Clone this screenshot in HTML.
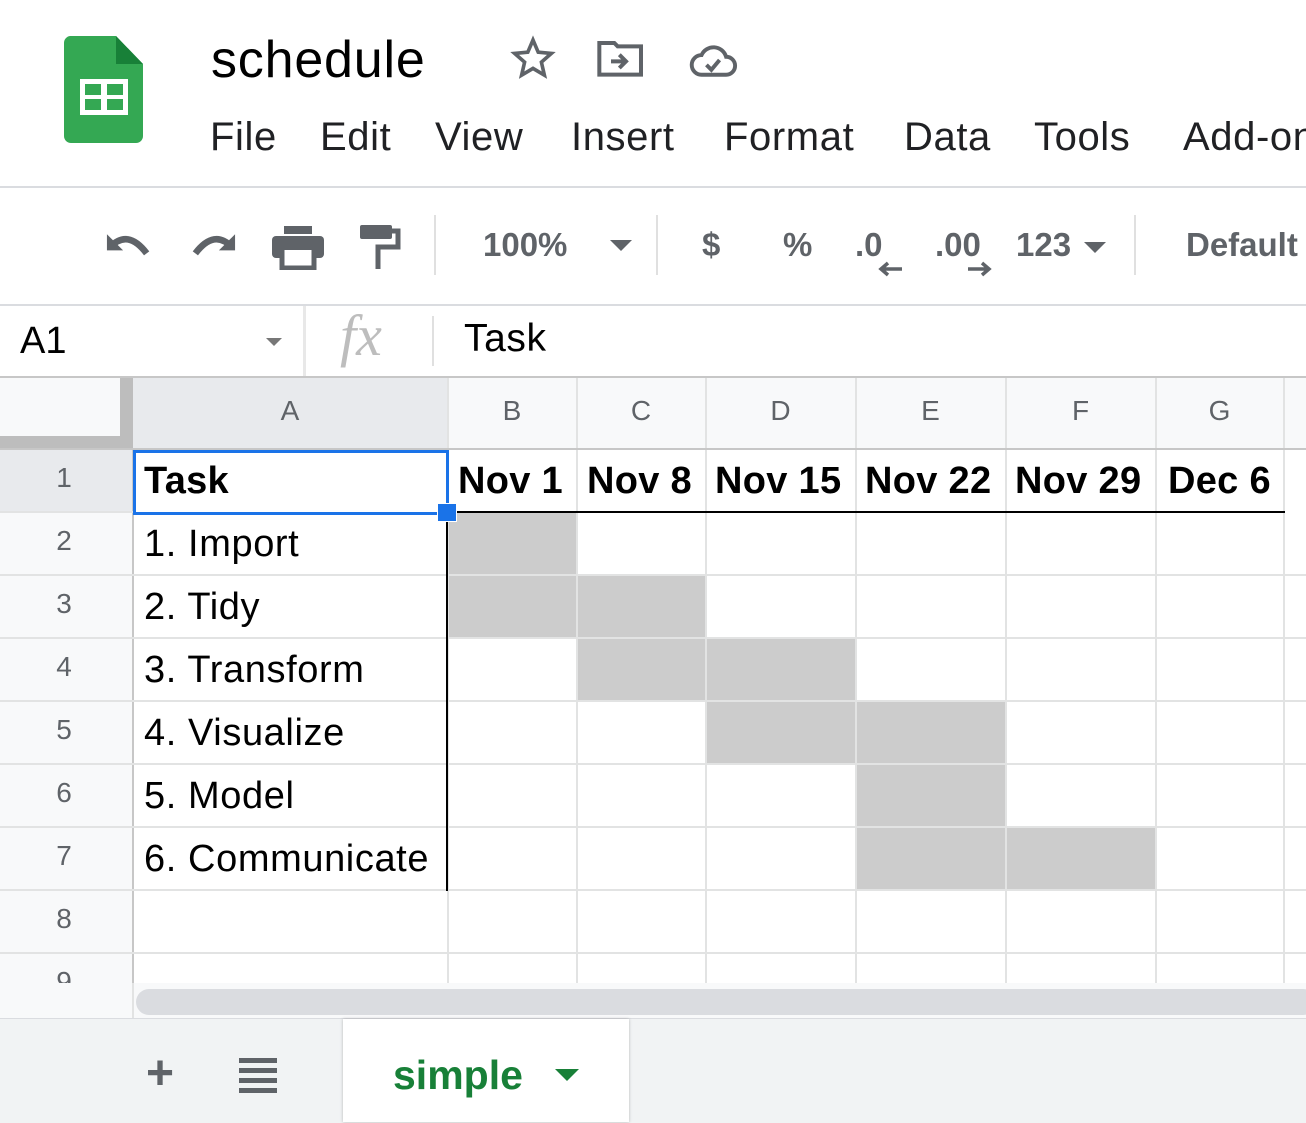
<!DOCTYPE html><html><head><style>
body{margin:0;width:1306px;height:1122px;overflow:hidden;background:#fff;font-family:"Liberation Sans",Arial,sans-serif;position:relative}
.a{position:absolute}
.t{position:absolute;white-space:nowrap}
.menu span{position:absolute;top:115px;font-size:40px;color:#202124;white-space:nowrap;letter-spacing:0.6px}
.tb{color:#5f6368;font-size:33px;font-weight:bold}
.hl{position:absolute;background:#e2e3e3}
.cell{position:absolute;font-size:38px;color:#000;white-space:nowrap;letter-spacing:0.6px}
.rh{position:absolute;left:0;width:128px;text-align:center;font-size:28px;color:#5f6368}
.ch{position:absolute;top:395px;text-align:center;font-size:28px;color:#5f6368}
.g{position:absolute;background:#cccccc}
</style></head><body>
<svg class="a" style="left:64px;top:36px" width="80" height="108" viewBox="0 0 80 108"><path d="M6 0H52L79 28V100a7 7 0 0 1-7 7H7a7 7 0 0 1-7-7V7a7 7 0 0 1 6-7z" fill="#34a853"/><path d="M52 0L79 28H52z" fill="#188038"/><rect x="16" y="43" width="48" height="36" fill="#fff"/><rect x="21" y="48" width="16" height="11" fill="#34a853"/><rect x="43" y="48" width="16" height="11" fill="#34a853"/><rect x="21" y="63" width="16" height="11" fill="#34a853"/><rect x="43" y="63" width="16" height="11" fill="#34a853"/></svg>
<div class="t" style="left:211px;top:30px;font-size:52px;color:#000;letter-spacing:0.8px">schedule</div>
<svg class="a" style="left:508px;top:34px" width="50" height="48" viewBox="0 0 24 24"><path d="M12 3l2.6 6.1 6.6.6-5 4.4 1.5 6.5L12 17.2 6.3 20.6l1.5-6.5-5-4.4 6.6-.6z" fill="none" stroke="#5f6368" stroke-width="1.8"/></svg>
<svg class="a" style="left:596px;top:38px" width="50" height="40" viewBox="0 0 30 24"><path d="M2 3h9l2 2h14v17H2z" fill="none" stroke="#5f6368" stroke-width="2.4"/><path d="M9 14h9M14 10l4 4-4 4" fill="none" stroke="#5f6368" stroke-width="2.4"/></svg>
<svg class="a" style="left:688px;top:42px" width="50" height="36" viewBox="0 0 30 22"><path d="M8 20a6 6 0 0 1 0-12 8 8 0 0 1 15 1 5.5 5.5 0 0 1 0 11z" fill="none" stroke="#5f6368" stroke-width="2.4"/><path d="M11 14l3 3 5-6" fill="none" stroke="#5f6368" stroke-width="2.4"/></svg>
<div class="menu"><span style="left:210px">File</span><span style="left:320px">Edit</span><span style="left:435px">View</span><span style="left:571px">Insert</span><span style="left:724px">Format</span><span style="left:904px">Data</span><span style="left:1034px">Tools</span><span style="left:1183px">Add-ons</span></div>
<div class="a" style="left:0;top:186px;width:1306px;height:2px;background:#dadce0"></div>
<svg class="a" style="left:104px;top:228px" width="50" height="36" viewBox="0 0 34 24"><path d="M4 13 Q16 0 29 17" fill="none" stroke="#5f6368" stroke-width="4.5"/><path d="M2 4v11h11z" fill="#5f6368"/></svg>
<svg class="a" style="left:188px;top:228px" width="50" height="36" viewBox="0 0 34 24"><path d="M30 13 Q18 0 5 17" fill="none" stroke="#5f6368" stroke-width="4.5"/><path d="M32 4v11h-11z" fill="#5f6368"/></svg>
<svg class="a" style="left:272px;top:226px" width="52" height="44" viewBox="0 0 26 22"><rect x="6" y="0" width="14" height="4" fill="#5f6368"/><rect x="0" y="5" width="26" height="11" rx="2" fill="#5f6368"/><rect x="6" y="12" width="14" height="9" fill="#fff"/><path d="M5 12v9h16v-9" fill="none" stroke="#5f6368" stroke-width="2.5"/></svg>
<svg class="a" style="left:360px;top:225px" width="42" height="44" viewBox="0 0 21 22"><rect x="0" y="0" width="16" height="7" rx="1" fill="#5f6368"/><path d="M16 3h3v8h-10v11" fill="none" stroke="#5f6368" stroke-width="2.5"/></svg>
<div class="a" style="left:434px;top:215px;width:2px;height:60px;background:#e0e0e0"></div>
<div class="t tb" style="left:483px;top:226px">100%</div>
<div class="a" style="left:610px;top:240px;width:0;height:0;border-left:11px solid transparent;border-right:11px solid transparent;border-top:11px solid #5f6368"></div>
<div class="a" style="left:656px;top:215px;width:2px;height:60px;background:#e0e0e0"></div>
<div class="t tb" style="left:702px;top:226px">$</div>
<div class="t tb" style="left:783px;top:226px">%</div>
<div class="t tb" style="left:855px;top:226px">.0</div>
<div class="t tb" style="left:935px;top:226px">.00</div>
<svg class="a" style="left:876px;top:260px" width="28" height="18" viewBox="0 0 28 18"><path d="M26 9H6M12 3L5 9l7 6" fill="none" stroke="#5f6368" stroke-width="3.5"/></svg>
<svg class="a" style="left:966px;top:260px" width="28" height="18" viewBox="0 0 28 18"><path d="M2 9h20M16 3l7 6-7 6" fill="none" stroke="#5f6368" stroke-width="3.5"/></svg>
<div class="t tb" style="left:1016px;top:226px">123</div>
<div class="a" style="left:1084px;top:242px;width:0;height:0;border-left:11px solid transparent;border-right:11px solid transparent;border-top:11px solid #5f6368"></div>
<div class="a" style="left:1134px;top:215px;width:2px;height:60px;background:#e0e0e0"></div>
<div class="t tb" style="left:1186px;top:226px">Default</div>
<div class="a" style="left:0;top:304px;width:1306px;height:2px;background:#dadce0"></div>
<div class="t" style="left:20px;top:320px;font-size:38px;color:#000">A1</div>
<div class="a" style="left:266px;top:338px;border-left:8px solid transparent;border-right:8px solid transparent;border-top:8px solid #777"></div>
<div class="a" style="left:303px;top:306px;width:3px;height:70px;background:#e8e8e8"></div>
<div class="t" style="left:340px;top:302px;font-size:58px;color:#bdbdbd;font-family:'Liberation Serif',serif;font-style:italic">fx</div>
<div class="a" style="left:432px;top:316px;width:2px;height:50px;background:#e0e0e0"></div>
<div class="t" style="left:464px;top:317px;font-size:39px;color:#000;letter-spacing:0.6px">Task</div>
<div class="a" style="left:0;top:376px;width:1306px;height:2px;background:#c7c7c7"></div>
<div class="a" style="left:0;top:378px;width:1306px;height:71px;background:#f8f9fa"></div>
<div class="a" style="left:0;top:449px;width:132px;height:534px;background:#f8f9fa"></div>
<div class="a" style="left:0;top:449px;width:132px;height:63px;background:#e8eaed"></div>
<div class="a" style="left:133px;top:378px;width:314px;height:71px;background:#e8eaed"></div>
<div class="a" style="left:0;top:436px;width:132px;height:13px;background:#bdbdbd"></div>
<div class="a" style="left:120px;top:378px;width:13px;height:71px;background:#bdbdbd"></div>
<div class="g" style="left:448px;top:512px;width:129px;height:126px"></div>
<div class="g" style="left:577px;top:575px;width:129px;height:63px"></div>
<div class="g" style="left:577px;top:638px;width:279px;height:63px"></div>
<div class="g" style="left:706px;top:701px;width:300px;height:63px"></div>
<div class="g" style="left:856px;top:764px;width:150px;height:63px"></div>
<div class="g" style="left:856px;top:827px;width:300px;height:63px"></div>
<div class="hl" style="left:132px;top:449px;width:2px;height:534px;background:#c7c7c7"></div>
<div class="hl" style="left:447px;top:378px;width:2px;height:605px"></div>
<div class="hl" style="left:576px;top:378px;width:2px;height:605px"></div>
<div class="hl" style="left:705px;top:378px;width:2px;height:605px"></div>
<div class="hl" style="left:855px;top:378px;width:2px;height:605px"></div>
<div class="hl" style="left:1005px;top:378px;width:2px;height:605px"></div>
<div class="hl" style="left:1155px;top:378px;width:2px;height:605px"></div>
<div class="hl" style="left:1283px;top:378px;width:2px;height:605px"></div>
<div class="hl" style="left:0;top:448px;width:1306px;height:2px;background:#c7c7c7"></div>
<div class="hl" style="left:0;top:574px;width:1306px;height:2px"></div>
<div class="hl" style="left:0;top:637px;width:1306px;height:2px"></div>
<div class="hl" style="left:0;top:700px;width:1306px;height:2px"></div>
<div class="hl" style="left:0;top:763px;width:1306px;height:2px"></div>
<div class="hl" style="left:0;top:826px;width:1306px;height:2px"></div>
<div class="hl" style="left:0;top:889px;width:1306px;height:2px"></div>
<div class="hl" style="left:0;top:952px;width:1306px;height:2px"></div>
<div class="hl" style="left:0;top:511px;width:134px;height:2px"></div>
<div class="a" style="left:447px;top:511px;width:838px;height:2px;background:#000"></div>
<div class="a" style="left:446px;top:511px;width:2px;height:380px;background:#000"></div>
<div class="ch" style="left:133px;width:314px">A</div>
<div class="ch" style="left:448px;width:128px">B</div>
<div class="ch" style="left:577px;width:128px">C</div>
<div class="ch" style="left:706px;width:149px">D</div>
<div class="ch" style="left:856px;width:149px">E</div>
<div class="ch" style="left:1006px;width:149px">F</div>
<div class="ch" style="left:1156px;width:127px">G</div>
<div class="rh" style="top:462px">1</div><div class="rh" style="top:525px">2</div><div class="rh" style="top:588px">3</div><div class="rh" style="top:651px">4</div><div class="rh" style="top:714px">5</div><div class="rh" style="top:777px">6</div><div class="rh" style="top:840px">7</div><div class="rh" style="top:903px">8</div><div class="rh" style="top:966px;height:17px;overflow:hidden">9</div>
<div class="cell" style="left:144px;top:460px;font-weight:bold;letter-spacing:0.3px">Task</div>
<div class="cell" style="left:458px;top:460px;font-weight:bold;letter-spacing:0.3px">Nov 1</div>
<div class="cell" style="left:587px;top:460px;font-weight:bold;letter-spacing:0.3px">Nov 8</div>
<div class="cell" style="left:715px;top:460px;font-weight:bold;letter-spacing:0.3px">Nov 15</div>
<div class="cell" style="left:865px;top:460px;font-weight:bold;letter-spacing:0.3px">Nov 22</div>
<div class="cell" style="left:1015px;top:460px;font-weight:bold;letter-spacing:0.3px">Nov 29</div>
<div class="cell" style="left:1168px;top:460px;font-weight:bold;letter-spacing:0.3px">Dec 6</div>
<div class="cell" style="left:144px;top:523px">1. Import</div>
<div class="cell" style="left:144px;top:586px">2. Tidy</div>
<div class="cell" style="left:144px;top:649px">3. Transform</div>
<div class="cell" style="left:144px;top:712px">4. Visualize</div>
<div class="cell" style="left:144px;top:775px">5. Model</div>
<div class="cell" style="left:144px;top:838px">6. Communicate</div>
<div class="a" style="left:133px;top:450px;width:310px;height:59px;border:3px solid #1a73e8"></div>
<div class="a" style="left:437px;top:503px;width:18px;height:17px;background:#1a73e8;border:1px solid #fff"></div>
<div class="a" style="left:0;top:983px;width:1306px;height:35px;background:#f8f9fa"></div>
<div class="a" style="left:132px;top:983px;width:2px;height:35px;background:#e2e3e3"></div>
<div class="a" style="left:136px;top:989px;width:1180px;height:26px;border-radius:13px;background:#dadce0"></div>
<div class="a" style="left:0;top:1018px;width:1306px;height:104px;background:#f1f3f4;border-top:1px solid #dadce0"></div>
<div class="t" style="left:146px;top:1046px;font-size:48px;color:#5f6368;font-weight:bold">+</div>
<svg class="a" style="left:239px;top:1058px" width="38" height="36"><rect y="0" width="38" height="5" fill="#5f6368"/><rect y="10" width="38" height="5" fill="#5f6368"/><rect y="20" width="38" height="5" fill="#5f6368"/><rect y="30" width="38" height="5" fill="#5f6368"/></svg>
<div class="a" style="left:343px;top:1019px;width:286px;height:103px;background:#fff;box-shadow:0 0 3px rgba(0,0,0,.25)"></div>
<div class="t" style="left:393px;top:1052px;font-size:41px;color:#188038;font-weight:bold">simple</div>
<div class="a" style="left:555px;top:1069px;border-left:12px solid transparent;border-right:12px solid transparent;border-top:12px solid #188038"></div>
</body></html>
